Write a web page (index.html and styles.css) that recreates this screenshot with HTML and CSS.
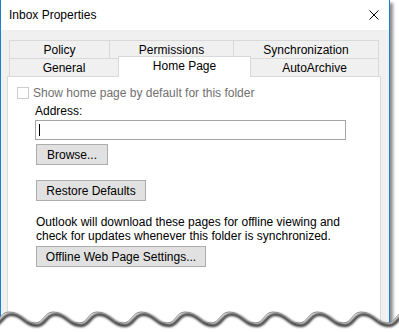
FILE: index.html
```html
<!DOCTYPE html>
<html lang="en">

<head>
    <meta charset="UTF-8" />
    <link rel="stylesheet" href="styles.css">
</head>

<body>
    <div class="window">
        <div class="titlebar">
            <span class="title">Inbox Properties</span>
            <svg class="close-icon" width="10" height="10" viewBox="0 0 10 10">
                <path d="M0.5 0.5 L9.5 9.5 M9.5 0.5 L0.5 9.5" stroke="#000" stroke-width="1" fill="none" />
            </svg>
        </div>

        <div class="dialog-body">
            <div class="tab-row">
                <div class="tab tab-policy">Policy</div>
                <div class="tab tab-permissions">Permissions</div>
                <div class="tab tab-sync">Synchronization</div>
            </div>
            <div class="tab-row">
                <div class="tab tab-general">General</div>
                <div class="tab tab-home active">Home Page</div>
                <div class="tab tab-archive">AutoArchive</div>
            </div>

            <div class="pane">
                <div class="check-row">
                    <span class="checkbox"></span>
                    <span>Show home page by default for this folder</span>
                </div>
                <div class="field-label">Address:</div>
                <div class="textbox"><span class="caret"></span></div>
                <button class="btn btn-browse">Browse...</button>
                <button class="btn btn-restore">Restore Defaults</button>
                <p class="note">Outlook will download these pages for offline viewing and<br>check for updates whenever this folder is synchronized.</p>
                <button class="btn btn-offline">Offline Web Page Settings...</button>
            </div>
        </div>
    </div>

    <!-- torn bottom edge -->
    <svg class="torn-edge" width="399" height="32" viewBox="0 0 399 32">
        <defs>
            <filter id="soft" x="-10%" y="-200%" width="120%" height="500%">
                <feGaussianBlur stdDeviation="1.2" />
            </filter>
        </defs>
        <path fill="#fff" d="M-35,12 C-22,12 -22,23 -9,23 C0,23 0,12 9,12 C22,12 22,23 35,23 C44,23 44,12 53,12 C66,12 66,23 79,23 C88,23 88,12 97,12 C110,12 110,23 123,23 C132,23 132,12 141,12 C154,12 154,23 167,23 C176,23 176,12 185,12 C198,12 198,23 211,23 C220,23 220,12 229,12 C242,12 242,23 255,23 C264,23 264,12 273,12 C286,12 286,23 299,23 C308,23 308,12 317,12 C330,12 330,23 343,23 C352,23 352,12 361,12 C374,12 374,23 387,23 C396,23 396,12 405,12 L405,40 L-35,40 Z" />
        <path fill="none" stroke="#000" stroke-opacity="0.8" stroke-width="3" filter="url(#soft)" transform="translate(2,2.5)" d="M-35,12 C-22,12 -22,23 -9,23 C0,23 0,12 9,12 C22,12 22,23 35,23 C44,23 44,12 53,12 C66,12 66,23 79,23 C88,23 88,12 97,12 C110,12 110,23 123,23 C132,23 132,12 141,12 C154,12 154,23 167,23 C176,23 176,12 185,12 C198,12 198,23 211,23 C220,23 220,12 229,12 C242,12 242,23 255,23 C264,23 264,12 273,12 C286,12 286,23 299,23 C308,23 308,12 317,12 C330,12 330,23 343,23 C352,23 352,12 361,12 C374,12 374,23 387,23 C396,23 396,12 405,12" />
        <path fill="none" stroke="#8a8a8a" stroke-width="1" d="M-35,12 C-22,12 -22,23 -9,23 C0,23 0,12 9,12 C22,12 22,23 35,23 C44,23 44,12 53,12 C66,12 66,23 79,23 C88,23 88,12 97,12 C110,12 110,23 123,23 C132,23 132,12 141,12 C154,12 154,23 167,23 C176,23 176,12 185,12 C198,12 198,23 211,23 C220,23 220,12 229,12 C242,12 242,23 255,23 C264,23 264,12 273,12 C286,12 286,23 299,23 C308,23 308,12 317,12 C330,12 330,23 343,23 C352,23 352,12 361,12 C374,12 374,23 387,23 C396,23 396,12 405,12" />
    </svg>
</body>

</html>
```

FILE: styles.css
```css
* {
    box-sizing: border-box;
}

body {
    margin: 0;
    width: 399px;
    height: 332px;
    overflow: hidden;
    position: relative;
    background-color: #fff;
    font-family: "Liberation Sans", Arial, sans-serif;
    font-size: 12px;
    color: #000;
}

.window {
    width: 390px;
    height: 332px;
    border-left: 1px solid #1a7fd4;
    border-right: 1px solid #1a7fd4;
    background-color: #f0f0f0;
    box-shadow: 3px 3px 3px rgba(0, 0, 0, 0.45);
}

.titlebar {
    height: 30px;
    background-color: #fff;
    display: flex;
    align-items: center;
    justify-content: space-between;
    padding: 0 10px 0 8px;
}

.close-icon {
    display: block;
}

.dialog-body {
    padding: 10px 8px 0 6px;
}

.tab-row {
    display: flex;
    align-items: flex-start;
    height: 18px;
    margin-left: 2px;
}

.tab {
    height: 18px;
    border-top: 1px solid #d9d9d9;
    border-left: 1px solid #d9d9d9;
    display: flex;
    align-items: center;
    justify-content: center;
    line-height: 14px;
}

.tab-policy {
    width: 100px;
}

.tab-permissions {
    width: 124px;
}

.tab-sync {
    width: 146px;
    border-right: 1px solid #d9d9d9;
}

.tab-general {
    width: 109px;
}

.tab-home {
    width: 133px;
}

.tab-archive {
    width: 128px;
    border-left: none;
    border-right: 1px solid #d9d9d9;
}

.tab.active {
    position: relative;
    margin-top: -2px;
    height: 21px;
    padding-bottom: 2px;
    background-color: #fff;
    border-right: 1px solid #d9d9d9;
}

.pane {
    width: 374px;
    height: 260px;
    background-color: #fff;
    border: 1px solid #d9d9d9;
    padding: 10px 0 0 9px;
    line-height: 14px;
}

.check-row {
    display: flex;
    align-items: center;
    gap: 4px;
    height: 12px;
    color: #707070;
}

.checkbox {
    width: 12px;
    height: 12px;
    border: 1px solid #cccccc;
    background-color: #fff;
}

.field-label {
    margin: 5px 0 0 18px;
}

.textbox {
    display: flex;
    align-items: center;
    width: 311px;
    height: 20px;
    margin: 2px 0 0 18px;
    border: 1px solid #a5a5a5;
    padding-left: 3px;
}

.caret {
    width: 1px;
    height: 12px;
    background-color: #000;
}

.btn {
    display: block;
    height: 21px;
    margin-left: 19px;
    padding: 0;
    font-family: inherit;
    font-size: 12px;
    color: #000;
    background-color: #e1e1e1;
    border: 1px solid #adadad;
}

.btn-browse {
    width: 72px;
    margin-top: 4px;
}

.btn-restore {
    width: 110px;
    margin-top: 15px;
}

.note {
    margin: 15px 0 0 19px;
    line-height: 13.5px;
}

.btn-offline {
    width: 170px;
    margin-top: 3px;
}

.torn-edge {
    position: absolute;
    left: 0;
    top: 300px;
}
```
